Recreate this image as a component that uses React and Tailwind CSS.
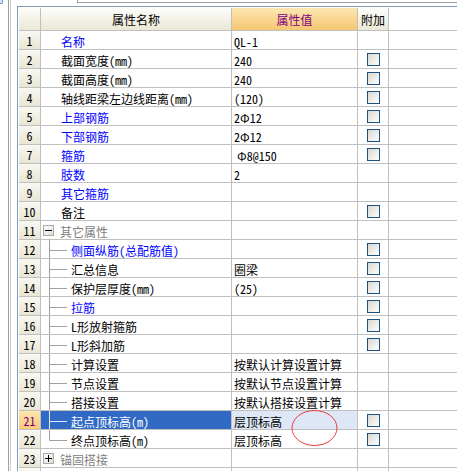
import clsx from 'clsx';

const rows = [
  { n: 1, name: '名称', blue: true, value: 'QL-1' },
  { n: 2, name: '截面宽度(mm)', value: '240', cb: true },
  { n: 3, name: '截面高度(mm)', value: '240', cb: true },
  { n: 4, name: '轴线距梁左边线距离(mm)', value: '(120)', cb: true },
  { n: 5, name: '上部钢筋', blue: true, value: '2Φ12', cb: true },
  { n: 6, name: '下部钢筋', blue: true, value: '2Φ12', cb: true },
  { n: 7, name: '箍筋', blue: true, value: 'Φ8@150', cb: true, indent: true },
  { n: 8, name: '肢数', blue: true, value: '2' },
  { n: 9, name: '其它箍筋', blue: true, value: '' },
  { n: 10, name: '备注', value: '', cb: true },
  { n: 11, name: '其它属性', group: 'minus' },
  { n: 12, name: '侧面纵筋(总配筋值)', child: true, blue: true, cb: true },
  { n: 13, name: '汇总信息', child: true, value: '圈梁', cb: true },
  { n: 14, name: '保护层厚度(mm)', child: true, value: '(25)', cb: true },
  { n: 15, name: '拉筋', child: true, blue: true, cb: true },
  { n: 16, name: 'L形放射箍筋', child: true, cb: true },
  { n: 17, name: 'L形斜加筋', child: true, cb: true },
  { n: 18, name: '计算设置', child: true, value: '按默认计算设置计算' },
  { n: 19, name: '节点设置', child: true, value: '按默认节点设置计算' },
  { n: 20, name: '搭接设置', child: true, value: '按默认搭接设置计算' },
  { n: 21, name: '起点顶标高(m)', child: true, value: '层顶标高', cb: true, selected: true },
  { n: 22, name: '终点顶标高(m)', child: true, value: '层顶标高', cb: true, last: true },
  { n: 23, name: '锚固搭接', group: 'plus' },
  { n: 24, name: '' }
];

const Checkbox = () => (
  <span className="block h-[13px] w-[13px] border border-[#1c5180] bg-linear-to-br from-[#d8d8d0] to-white" />
);

const TreeBox = ({ type }) => (
  <span className="ml-[2px] mr-[6px] flex h-[11px] w-[11px] items-center justify-center border border-[#a8a8a8] bg-linear-to-br from-white to-[#dcdcd6]">
    <svg width="7" height="7" viewBox="0 0 7 7">
      <path d="M0 3.5H7" stroke="#000" strokeWidth="1" />
      {type === 'plus' && <path d="M3.5 0V7" stroke="#000" strokeWidth="1" />}
    </svg>
  </span>
);

const TreeLines = ({ last, selected }) => {
  const c = selected ? '#dfe8f8' : '#a0a0a0';
  return (
    <svg width="30" height="18" className="shrink-0">
      <path d={last ? 'M8.5 0V10.5' : 'M8.5 0V18'} stroke={c} strokeWidth="1" />
      <path d="M8.5 10.5H26" stroke={c} strokeWidth="1" />
    </svg>
  );
};

const Row = ({ row }) => {
  const { n, name, blue, value, cb, group, child, selected, last, indent } = row;
  return (
    <div className="flex h-[19px] shrink-0 border-b border-[#c0c0c0]">
      <div
        className={clsx(
          'flex w-[22px] items-center justify-center border-r border-[#c0c0c0] pt-[2px] bg-linear-to-b',
          selected ? 'from-[#fde6ad] to-[#f8c979] text-[#800080]' : 'from-[#f9f8f1] to-[#e9e6d5] text-black'
        )}
      >
        {n < 24 ? n : ''}
      </div>
      <div
        className={clsx(
          'flex w-[191px] items-center border-r border-[#c0c0c0] whitespace-pre',
          selected && 'bg-[#316ac5]'
        )}
      >
        {group && <TreeBox type={group} />}
        {child && <TreeLines last={last} selected={selected} />}
        <span
          className={clsx(
            'pt-[3px]',
            !group && !child && 'pl-[20px]',
            group ? 'text-[#808080]' : selected ? 'text-white' : blue ? 'text-[#0000ff]' : 'text-black'
          )}
        >
          {name}
        </span>
      </div>
      <div
        className={clsx(
          'flex w-[126px] items-center border-r border-[#c0c0c0] pt-[3px] whitespace-pre',
          indent ? 'pl-[5px]' : 'pl-[2px]',
          selected && 'bg-[#dde7f5]'
        )}
      >
        {value}
      </div>
      <div className="flex w-[31px] items-center justify-center border-r border-[#c0c0c0] pl-[1px] pt-[1px]">
        {cb && <Checkbox />}
      </div>
    </div>
  );
};

const App = () => {
  return (
    <div className="relative flex h-[471px] w-[457px] overflow-hidden bg-white font-['Noto_Sans_Mono_CJK_SC','Noto_Sans_CJK_SC',sans-serif] text-[12px] leading-none text-black">
      {/* left frame edge */}
      <div className="flex w-[17px] shrink-0">
        <div className="w-[8px]">
          <div className="h-[4px] w-[3px] rounded-br-[2px] border-r border-b border-[#6f8fc0] bg-[#d6e2f5]" />
        </div>
        <div className="w-px bg-[#a0a0a0]" />
        <div className="w-px bg-white" />
        <div className="w-px bg-[#cfcfcf]" />
        <div className="w-[6px] bg-white" />
      </div>

      <div className="flex min-w-0 flex-1 flex-col">
        <div className="h-[6px] shrink-0">
          <div className="ml-[60px] h-[3px] border-b border-l border-[#a0a0a0]" />
        </div>
        <div className="flex flex-1 flex-col border-t border-l border-[#7f9db9] pt-px pl-px">
          {/* header */}
          <div className="flex h-[23px] shrink-0 border-b border-[#c0c0c0]">
            <div className="w-[22px] border-r border-[#c0c0c0] bg-linear-to-b from-[#fdfdfb] to-[#ebe8d6]" />
            <div className="flex w-[191px] items-center justify-center border-r border-[#c0c0c0] bg-linear-to-b from-[#fdfdfb] to-[#ebe8d6] pt-[1px]">
              属性名称
            </div>
            <div className="flex w-[126px] items-center justify-center border-r border-[#c0c0c0] bg-linear-to-b from-[#fde7b1] to-[#f5c670] pt-[1px] text-[#800080]">
              属性值
            </div>
            <div className="flex w-[31px] items-center justify-center border-r border-[#c0c0c0] bg-linear-to-b from-[#fdfdfb] to-[#ebe8d6] pt-[1px]">
              附加
            </div>
          </div>
          {rows.map((row) => (
            <Row key={row.n} row={row} />
          ))}
        </div>
      </div>

      {/* red annotation circle */}
      <svg className="pointer-events-none absolute left-[291px] top-[409px]" width="47" height="38" viewBox="0 0 47 38">
        <ellipse cx="23.5" cy="19" rx="22.5" ry="17.5" fill="none" stroke="#f03a3a" strokeWidth="1" />
      </svg>
    </div>
  );
};

export default App;
